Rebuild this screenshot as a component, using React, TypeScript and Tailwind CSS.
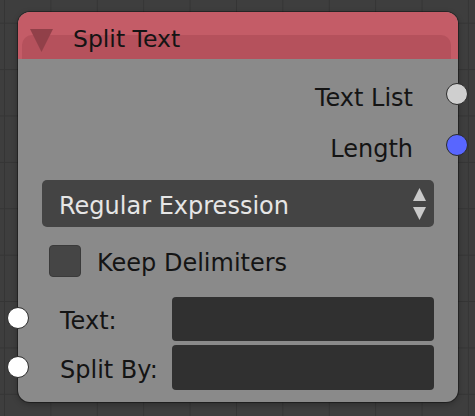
const FONT = "font-['DejaVu_Sans',sans-serif]";

function Socket({ color, className }: { color: string; className: string }) {
  return (
    <span
      className={`absolute h-[22px] w-[22px] rounded-full border border-[#2b2b2b] ${color} ${className}`}
    />
  );
}

function UpDown() {
  return (
    <svg width="13" height="32" viewBox="0 0 13 32" aria-hidden>
      <path d="M6.5 0 L13 13 L0 13 Z" fill="#c9c9c9" />
      <path d="M0 19 L13 19 L6.5 32 Z" fill="#c9c9c9" />
    </svg>
  );
}

export default function App() {
  return (
    <div
      className={`h-[416px] w-[475px] overflow-hidden bg-[#3e3e3e] pl-[18px] pt-[12px] ${FONT} [background-image:linear-gradient(to_right,#353535_1px,transparent_1px),linear-gradient(to_bottom,#353535_1px,transparent_1px)] [background-size:46.4px_46.4px] [background-position:4px_22.7px]`}
    >
      <div className="relative flex h-[390px] w-[440px] flex-col rounded-[12px] bg-[#8a8a8a] shadow-[0_0_0_1px_rgba(0,0,0,0.35),0_2px_6px_rgba(0,0,0,0.3)]">
        {/* header */}
        <div className="relative flex h-[47px] items-start overflow-hidden rounded-t-[12px] bg-[#c45c67]">
          <div className="absolute bottom-0 left-[4px] right-[7px] top-[23px] rounded-t-[10px] bg-[#b5515c]" />
          <svg
            className="relative ml-[12px] mt-[17px]"
            width="23"
            height="23"
            viewBox="0 0 23 23"
            aria-hidden
          >
            <path d="M0 0 L23 0 L11.5 23 Z" fill="#914049" />
          </svg>
          <span className="relative ml-[20px] mt-[14px] text-[23.5px] leading-[27px] text-[#141414]">
            Split Text
          </span>
        </div>

        {/* body */}
        <div className="flex flex-col pb-[12px] pt-[26px] text-[24px] leading-[27px] text-[#141414]">
          <div className="relative flex h-[27px] justify-end pr-[45px]">
            Text List
            <Socket color="bg-[#cfcfcf]" className="right-[-10px] top-[-2px]" />
          </div>
          <div className="relative mt-[24px] flex h-[27px] justify-end pr-[45px]">
            Length
            <Socket color="bg-[#5866ff]" className="right-[-10px] top-[-2px]" />
          </div>

          <div className="mx-[24px] mt-[17px] flex h-[47px] items-center justify-between rounded-[5px] bg-[#444444] pl-[17px] pr-[8px] text-[#e6e6e6]">
            <span className="mt-[5px]">Regular Expression</span>
            <UpDown />
          </div>

          <div className="ml-[31px] mt-[18px] flex h-[32px] items-center">
            <span className="h-[32px] w-[32px] rounded-[4px] border border-[#3a3a3a] bg-[#454545]" />
            <span className="ml-[16px] mt-[5px]">Keep Delimiters</span>
          </div>

          <div className="relative mt-[20px] flex h-[44px] items-center pl-[42px] pr-[24px]">
            <span className="mt-[5px] w-[112px]">Text:</span>
            <span className="h-full flex-1 rounded-[4px] bg-[#303030]" />
            <Socket color="bg-white" className="left-[-11px] top-[10px]" />
          </div>
          <div className="relative mt-[4px] flex h-[45px] items-center pl-[42px] pr-[24px]">
            <span className="mt-[5px] w-[112px]">Split By:</span>
            <span className="h-full flex-1 rounded-[4px] bg-[#303030]" />
            <Socket color="bg-white" className="left-[-11px] top-[11px]" />
          </div>
        </div>
      </div>
    </div>
  );
}
